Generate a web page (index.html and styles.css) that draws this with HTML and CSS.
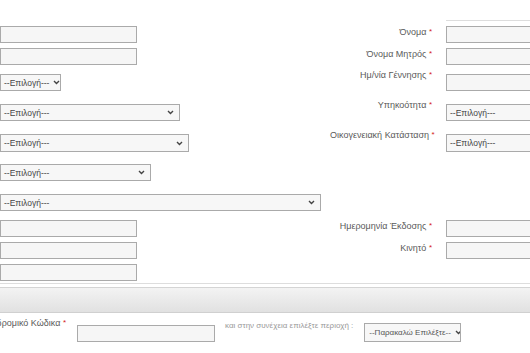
FILE: index.html
```html
<!DOCTYPE html>
<html lang="el">
<head>
    <meta charset="UTF-8">
    <meta name="viewport" content="width=device-width, initial-scale=1.0">
    <title>Στοιχεία Αιτούντος</title>
    <link rel="stylesheet" href="styles.css">
</head>
<body>
    <div class="page">
        <div class="form">
            <div class="row row-top">
                <div></div>
                <div></div>
                <div class="top-rule"></div>
            </div>

            <div class="row">
                <div class="cell"><input class="field" type="text"></div>
                <label class="lbl">Όνομα <span class="req">*</span></label>
                <div class="cell"><input class="field" type="text"></div>
            </div>

            <div class="row row-md">
                <div class="cell"><input class="field" type="text"></div>
                <label class="lbl">Όνομα Μητρός <span class="req">*</span></label>
                <div class="cell"><input class="field" type="text"></div>
            </div>

            <div class="row row-lg">
                <div class="cell">
                    <div class="select w-xs"><span>--Επιλογή---</span><svg class="chev" width="7" height="5" viewBox="0 0 7 5"><path d="M1 1l2.5 2.5L6 1" fill="none" stroke="#444" stroke-width="1.4"/></svg></div>
                </div>
                <label class="lbl lbl-up">Ημ/νία Γέννησης <span class="req">*</span></label>
                <div class="cell"><input class="field" type="text"></div>
            </div>

            <div class="row row-lg">
                <div class="cell">
                    <div class="select w-md"><span>--Επιλογή---</span><svg class="chev" width="7" height="5" viewBox="0 0 7 5"><path d="M1 1l2.5 2.5L6 1" fill="none" stroke="#444" stroke-width="1.4"/></svg></div>
                </div>
                <label class="lbl lbl-up">Υπηκοότητα <span class="req">*</span></label>
                <div class="cell">
                    <div class="select w-md"><span>--Επιλογή---</span></div>
                </div>
            </div>

            <div class="row row-lg">
                <div class="cell">
                    <div class="select tall w-lg"><span>--Επιλογή---</span><svg class="chev" width="7" height="5" viewBox="0 0 7 5"><path d="M1 1l2.5 2.5L6 1" fill="none" stroke="#444" stroke-width="1.4"/></svg></div>
                </div>
                <label class="lbl lbl-up">Οικογενειακή Κατάσταση <span class="req">*</span></label>
                <div class="cell">
                    <div class="select tall w-md"><span>--Επιλογή---</span></div>
                </div>
            </div>

            <div class="row row-lg">
                <div class="cell">
                    <div class="select w-sm"><span>--Επιλογή---</span><svg class="chev" width="7" height="5" viewBox="0 0 7 5"><path d="M1 1l2.5 2.5L6 1" fill="none" stroke="#444" stroke-width="1.4"/></svg></div>
                </div>
                <div></div>
                <div></div>
            </div>

            <div class="row row-md">
                <div class="cell">
                    <div class="select w-xl"><span>--Επιλογή---</span><svg class="chev" width="7" height="5" viewBox="0 0 7 5"><path d="M1 1l2.5 2.5L6 1" fill="none" stroke="#444" stroke-width="1.4"/></svg></div>
                </div>
                <div></div>
                <div></div>
            </div>

            <div class="row">
                <div class="cell"><input class="field" type="text"></div>
                <label class="lbl">Ημερομηνία Έκδοσης <span class="req">*</span></label>
                <div class="cell"><input class="field" type="text"></div>
            </div>

            <div class="row">
                <div class="cell"><input class="field" type="text"></div>
                <label class="lbl">Κινητό <span class="req">*</span></label>
                <div class="cell"><input class="field" type="text"></div>
            </div>

            <div class="row row-end">
                <div class="cell"><input class="field" type="text"></div>
                <div></div>
                <div></div>
            </div>
        </div>

        <div class="rule"></div>
        <div class="band"></div>

        <div class="postal">
            <label class="postal-lbl"><span>Ταχυδρομικό Κώδικα <span class="req">*</span></span></label>
            <input class="field postal-field" type="text">
            <span class="hint">και στην συνέχεια επιλέξτε περιοχή :</span>
            <div class="select area"><span>--Παρακαλώ Επιλέξτε--</span><svg class="chev" width="7" height="5" viewBox="0 0 7 5"><path d="M1 1l2.5 2.5L6 1" fill="none" stroke="#444" stroke-width="1.4"/></svg></div>
        </div>
    </div>
</body>
</html>
```

FILE: styles.css
```css
html, body {
    margin: 0;
    padding: 0;
    background: #fff;
    overflow: hidden;
}

.page {
    width: 530px;
    height: 353px;
    overflow: hidden;
    font-family: 'Liberation Sans', Arial, sans-serif;
    font-size: 9px;
    color: #5a5a5a;
}

.row {
    display: grid;
    grid-template-columns: 330px 116px 84px;
    height: 22px;
}

.row-top {
    height: 26px;
}

.row-md {
    height: 26px;
}

.row-lg {
    height: 30px;
}

.row-end {
    height: 19px;
}

.top-rule {
    height: 20px;
    border-bottom: 1px solid #ddd;
}

.cell {
    display: flex;
    align-items: flex-start;
}

.lbl {
    text-align: right;
    padding-right: 14px;
    line-height: 12px;
    white-space: nowrap;
}

/* labels next to taller controls sit a little higher */
.lbl-up {
    margin-top: -5px;
}

.req {
    color: #d42020;
    font-size: 8px;
    vertical-align: 1px;
}

.field {
    box-sizing: border-box;
    width: 137px;
    height: 17px;
    margin: 0;
    padding: 0 3px;
    border: 1px solid #aaa;
    background: #f6f6f6;
    flex-shrink: 0;
}

.select {
    box-sizing: border-box;
    display: flex;
    align-items: center;
    justify-content: space-between;
    gap: 4px;
    height: 17px;
    padding: 0 5px 0 3px;
    border: 1px solid #aaa;
    background: #f7f7f7;
    color: #444;
    font-size: 8.5px;
    white-space: nowrap;
    overflow: hidden;
    flex-shrink: 0;
}

.select.tall {
    height: 18px;
}

.chev {
    display: block;
    flex-shrink: 0;
}

.w-xs { width: 61px; }
.w-sm { width: 151px; }
.w-md { width: 180px; }
.w-lg { width: 189px; }
.w-xl { width: 321px; }

.rule {
    height: 1px;
    background: #ddd;
    margin-bottom: 3px;
}

.band {
    height: 24px;
    border-top: 1px solid #d4d4d4;
    border-bottom: 1px solid #d0d0d0;
    background: linear-gradient(#f3f3f3, #e1e1e1);
}

.postal {
    display: flex;
    align-items: flex-start;
    padding-top: 4px;
}

.postal-lbl {
    width: 66px;
    display: flex;
    justify-content: flex-end;
    white-space: nowrap;
    line-height: 12px;
    flex-shrink: 0;
}

.postal-field {
    width: 138px;
    margin: 8px 0 0 11px;
}

.hint {
    margin: 3px 0 0 10px;
    font-size: 8px;
    line-height: 12px;
    color: #999;
    white-space: nowrap;
}

.select.area {
    width: 97px;
    height: 19px;
    margin: 6px 0 0 11px;
    padding-left: 4px;
    font-size: 8px;
    color: #555;
}
```
